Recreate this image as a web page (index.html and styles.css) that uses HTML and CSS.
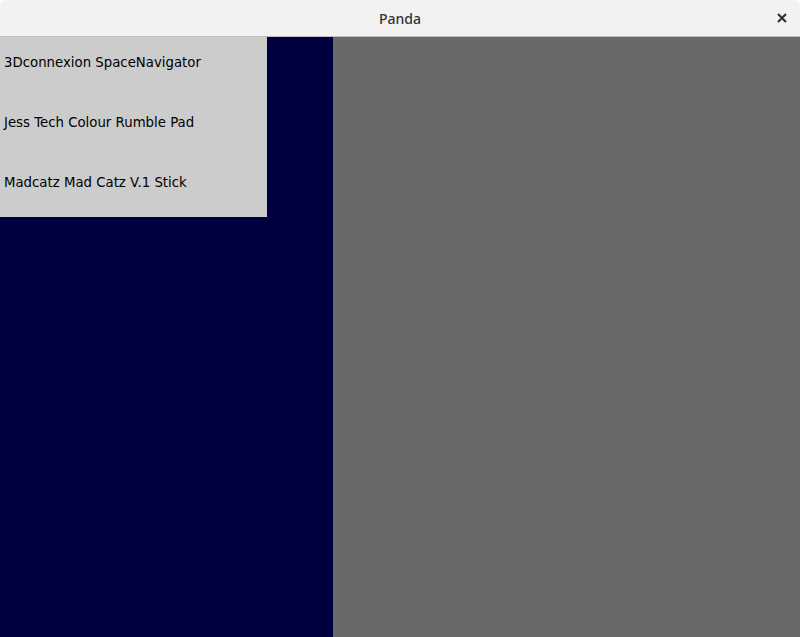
FILE: index.html
```html
<!DOCTYPE html>
<html lang="en">
<head>
    <meta charset="UTF-8">
    <title>Panda</title>
    <link rel="stylesheet" href="styles.css">
</head>
<body>
    <header class="titlebar">
        <span class="title">Panda</span>
        <span class="close">
            <svg width="10" height="10" viewBox="0 0 10 10">
                <path d="M1 1 L9 9 M9 1 L1 9" stroke="#2e3436" stroke-width="2.2" fill="none"/>
            </svg>
        </span>
    </header>
    <div class="window">
        <div class="viewport">
            <div class="device-list">
                <div class="device">3Dconnexion SpaceNavigator</div>
                <div class="device">Jess Tech Colour Rumble Pad</div>
                <div class="device">Madcatz Mad Catz V.1 Stick</div>
            </div>
        </div>
        <div class="side"></div>
    </div>
</body>
</html>
```

FILE: styles.css
```css
body {
    margin: 0;
    padding: 0;
    height: 637px;
    display: flex;
    flex-direction: column;
    font-family: "DejaVu Sans", sans-serif;
    overflow: hidden;
}

.titlebar {
    height: 36px;
    flex: none;
    display: flex;
    align-items: center;
    justify-content: center;
    position: relative;
    background-color: #f2f2f2;
    border-bottom: 1px solid #bdbdbd;
    border-radius: 6px 6px 0 0;
}

.title {
    font-family: "Noto Sans", sans-serif;
    font-size: 14px;
    font-weight: 500;
    color: #2e3436;
}

.close {
    position: absolute;
    right: 13px;
    top: 13px;
    display: flex;
}

.window {
    flex: 1;
    display: flex;
}

.viewport {
    width: 333px;
    background-color: #000040;
}

.side {
    flex: 1;
    background-color: #696969;
}

.device-list {
    width: 267px;
    background-color: #cccccc;
}

.device {
    height: 60px;
    padding-left: 4px;
    padding-top: 18px;
    box-sizing: border-box;
    font-size: 13.3px;
    color: #000000;
}
```
